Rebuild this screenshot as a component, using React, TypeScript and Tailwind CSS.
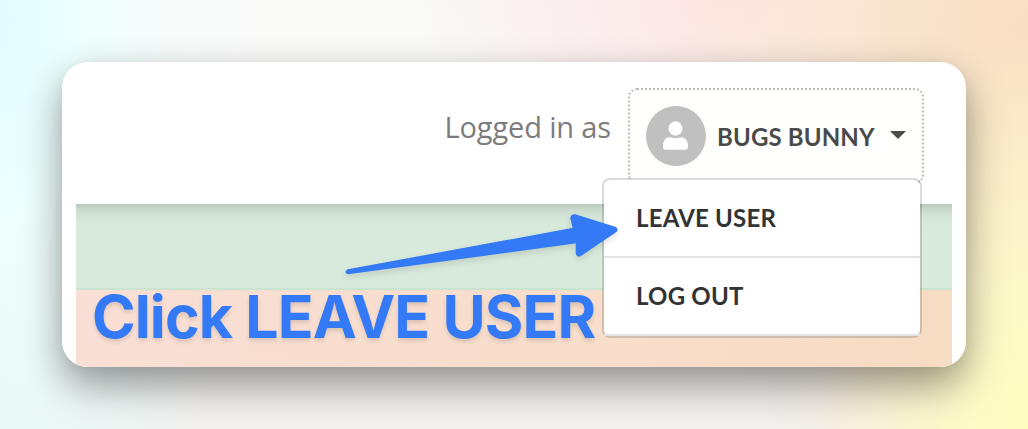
function UserBadge() {
  return (
    <svg viewBox="0 0 60 60" className="h-[60px] w-[60px] shrink-0">
      <circle cx="30" cy="30" r="30" fill="#c0c0c0" />
      <ellipse cx="29.5" cy="22.5" rx="7" ry="7.2" fill="#fff" />
      <path d="M17 41V40c0-5.500 3-8.800 7-8.800 2 0 3.200 1 5.500 1s3.500-1 5.500-1c4 0 7 3.300 7 8.800v1c0 1.700-1.200 2.800-2.900 2.800H19.900c-1.700 0-2.900-1.100-2.900-2.800z" fill="#fff" />
    </svg>
  )
}

function MenuItem({ label }: { label: string }) {
  return (
    <button
      type="button"
      className="flex h-[78px] w-full items-center border-b-2 border-[#e3e3e3] pl-8 text-left font-['Lato',sans-serif] text-2xl font-bold tracking-[0.2px] text-[#333]"
    >
      {label}
    </button>
  )
}

export default function App() {
  return (
    <div className="h-[429px] w-[1028px] overflow-hidden bg-[#f7f5f4] bg-[radial-gradient(ellipse_260px_620px_at_0%_5%,#e4fcff_0%,#edfffe_30%,#f3fdfc80_65%,#f7fafa00_100%),radial-gradient(ellipse_200px_300px_at_0%_100%,#e0f5f3_0%,#e6f5f300_100%),radial-gradient(ellipse_220px_400px_at_100%_100%,#fffec0_0%,#fdfac8_30%,#faf3ce00_100%),radial-gradient(ellipse_370px_560px_at_100%_10%,#f9dfc4_0%,#f9e4cd_35%,#fbe8dd00_100%),radial-gradient(ellipse_300px_190px_at_70%_0%,#fde5e5_0%,#fdecec00_100%),linear-gradient(to_bottom,#f9f9f8_0%,#fafaf9_30%,#f3f1ef_100%)] p-[62px]">
      <div className="relative h-[305px] w-[904px] rounded-[26px] shadow-[0_18px_40px_rgba(0,0,0,0.4),0_2px_14px_rgba(0,0,0,0.04)]">
        <div className="h-full overflow-hidden rounded-[26px] bg-white">
          <header className="flex h-[142px] justify-end pr-[42px] pt-[26px]">
            <p className="mr-[17px] pt-[18px] font-['Open_Sans',sans-serif] text-[29px] leading-[42px] tracking-[-0.15px] text-[#7c7c7c]">
              Logged in as
            </p>
            <button
              type="button"
              className="flex h-[96px] w-[296px] items-start rounded-[9px] border-2 border-dotted border-[#bdbdbd] bg-[#fffffd] pl-4 pt-4"
            >
              <UserBadge />
              <span className="ml-[11px] mt-[13px] whitespace-nowrap font-['Lato',sans-serif] text-2xl font-bold leading-9 tracking-[0.15px] text-[#4a4a4a]">
                BUGS BUNNY
              </span>
              <svg viewBox="0 0 16 8" className="ml-[15px] mt-[25px] h-2 w-4">
                <path d="M0 0h16L8 8z" fill="#4a4a4a" />
              </svg>
            </button>
          </header>
          <div className="mx-[14px]">
            <div className="h-[86px] border-b-2 border-[#c9e5cf] bg-[#d8eadb] bg-[linear-gradient(to_bottom,#b9c8bc_0px,#c8d9cb_5px,#d2e4d5_11px,#d8eadb_21px)]" />
            <div className="h-[77px] bg-linear-to-r from-[#f9dfd5] to-[#f7dcc4]" />
          </div>
        </div>

        {/* Account menu */}
        <div className="absolute left-[540px] top-[116px] w-[320px] rounded-[8px] border-2 border-black/15 bg-white bg-clip-padding">
          <MenuItem label="LEAVE USER" />
          <MenuItem label="LOG OUT" />
        </div>

        {/* Callout */}
        <p className="absolute left-[30px] top-[219px] whitespace-nowrap font-['Inter',sans-serif] text-[59px] font-bold leading-[72px] tracking-[-0.88px] text-[#347af6] [text-shadow:0_3px_4px_rgba(0,0,0,0.12)]">
          Click LEAVE USER
        </p>
        <svg viewBox="0 0 290 80" className="absolute left-[278px] top-[142px] h-20 w-[290px] overflow-visible drop-shadow-[0_3px_3px_rgba(0,0,0,0.12)]">
          <path
            d="M8 66 233.500 24.500 231 13.500Q232 10.500 235 11L275 23.500Q278 25 276 27.500L240.500 51.500Q237 52.500 236.500 49.500V38.500L8 69.500Q4.500 68 8 66Z"
            fill="#347af6"
            stroke="#347af6"
            strokeWidth="1.5"
            strokeLinejoin="round"
          />
        </svg>
      </div>
    </div>
  )
}
